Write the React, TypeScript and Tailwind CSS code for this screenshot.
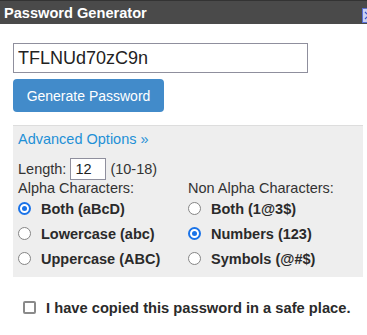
import React from "react";

function Radio({ checked, label }: { checked?: boolean; label: string }) {
  return (
    <div className="flex items-center h-[25px]">
      {checked ? (
        <span className="w-[13px] h-[13px] shrink-0 rounded-full border-2 border-[#1a73e8] bg-white flex items-center justify-center">
          <span className="w-[5px] h-[5px] rounded-full bg-[#1a73e8]" />
        </span>
      ) : (
        <span className="w-[13px] h-[13px] shrink-0 rounded-full border border-[#858585] bg-white" />
      )}
      <span className="ml-[10px] font-bold text-[#2a2a2a] whitespace-nowrap">{label}</span>
    </div>
  );
}

export default function App() {
  return (
    <div
      className="relative w-[367px] h-[335px] overflow-hidden bg-white text-[14.5px] leading-[20px] text-[#333]"
      style={{ fontFamily: '"Liberation Sans", Arial, sans-serif' }}
    >
      <div className="h-[1px] bg-[#333]" />
      <div className="relative h-[23px] bg-[#4a4a4a] flex items-center pl-[4px]">
        <span className="text-white font-bold text-[14.6px]">Password Generator</span>
        <svg
          className="absolute left-[362px] top-[7px]"
          width="10"
          height="15"
          viewBox="0 0 10 15"
        >
          <rect x="0.5" y="0.5" width="9" height="14" fill="#c9d1f2" stroke="#5b6fd6" />
          <path d="M3 4 L6.5 7.5 L3 11" fill="none" stroke="#3a4fc8" strokeWidth="1.2" />
        </svg>
      </div>

      <div className="px-[13px]">
        <input
          type="text"
          defaultValue="TFLNUd70zC9n"
          className="mt-[19px] block w-[295px] h-[30px] border border-[#8f8f9d] px-[4px] text-[18px] text-[#222] outline-none"
          style={{ fontFamily: '"Liberation Sans", Arial, sans-serif' }}
        />
        <button className="mt-[6px] block w-[151px] h-[33px] rounded-[4px] bg-[#428bca] text-white text-[14px]">
          Generate Password
        </button>

        <div className="mt-[13px] w-[350px] bg-[#eeeeee] border-t border-[#dddddd] pl-[5px] pt-[3px] pb-[6px]">
          <div className="text-[#1e90d6]">Advanced Options »</div>
          <div className="mt-[9px] flex items-center h-[22px]">
            <span>Length:</span>
            <input
              type="text"
              defaultValue="12"
              className="ml-[4px] w-[36px] h-[22px] border border-[#8f8f9d] bg-white px-[4px] text-[14.5px] text-[#222] outline-none"
              style={{ fontFamily: '"Liberation Sans", Arial, sans-serif' }}
            />
            <span className="ml-[4px]">(10-18)</span>
          </div>
          <div className="flex">
            <div className="w-[170px]">
              <div className="leading-[16px]">Alpha Characters:</div>
              <Radio checked label="Both (aBcD)" />
              <Radio label="Lowercase (abc)" />
              <Radio label="Uppercase (ABC)" />
            </div>
            <div>
              <div className="leading-[16px]">Non Alpha Characters:</div>
              <Radio label="Both (1@3$)" />
              <Radio checked label="Numbers (123)" />
              <Radio label="Symbols (@#$)" />
            </div>
          </div>
        </div>

        <div className="mt-[24px] ml-[10px] flex items-center h-[13px]">
          <span className="w-[13px] h-[13px] shrink-0 rounded-[2px] border-2 border-[#8a8a8a] bg-white" />
          <span className="ml-[10px] font-bold text-[14.7px] text-[#2a2a2a] whitespace-nowrap">
            I have copied this password in a safe place.
          </span>
        </div>
      </div>
    </div>
  );
}
